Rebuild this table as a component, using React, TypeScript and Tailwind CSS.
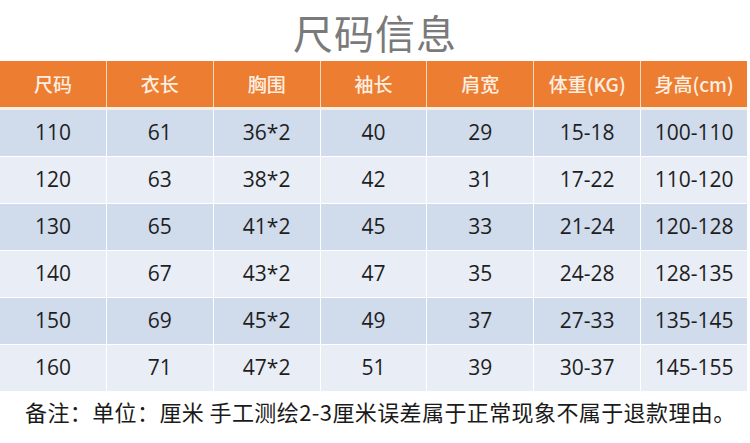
import React from "react";

const headers = ["尺码", "衣长", "胸围", "袖长", "肩宽", "体重(KG)", "身高(cm)"];
const rows = [
  ["110", "61", "36*2", "40", "29", "15-18", "100-110"],
  ["120", "63", "38*2", "42", "31", "17-22", "110-120"],
  ["130", "65", "41*2", "45", "33", "21-24", "120-128"],
  ["140", "67", "43*2", "47", "35", "24-28", "128-135"],
  ["150", "69", "45*2", "49", "37", "27-33", "135-145"],
  ["160", "71", "47*2", "51", "39", "30-37", "145-155"],
];

export default function App() {
  return (
    <div className="w-[750px] h-[443px] bg-white overflow-hidden" style={{ fontFamily: '"Open Sans", "Noto Sans CJK SC", sans-serif' }}>
      <div className="h-[61px] flex items-center justify-center pt-[2px]">
        <span className="text-[40px] leading-none text-[#7a7a7a] tracking-[1px]" style={{ fontFamily: '"Noto Sans CJK SC", sans-serif' }}>
          尺码信息
        </span>
      </div>
      <div className="w-[747px] flex flex-col">
        <div className="grid grid-cols-7 gap-px bg-[#f3d9bf] h-[46px]">
          {headers.map((h) => (
            <div key={h} className="bg-[#ed7d31] flex items-center justify-center text-[19px] font-medium text-[#fcefe2]" style={{ fontFamily: '"Noto Sans CJK SC", sans-serif' }}>
              {h}
            </div>
          ))}
        </div>
        <div className="h-[3px] bg-[#f7efe4]" />
        <div className="flex flex-col gap-px bg-white">
          {rows.map((r, i) => (
            <div key={i} className="grid grid-cols-7 gap-px h-[46px]">
              {r.map((c, j) => (
                <div key={j} className={`${i % 2 === 0 ? "bg-[#d0dbeb]" : "bg-[#e9edf5]"} flex items-center justify-center text-[21px] text-[#1e1e1e]`}>
                  {c}
                </div>
              ))}
            </div>
          ))}
        </div>
      </div>
      <div className="pl-[25px] pt-[9px] text-[22px] leading-none text-[#1a1a1a] whitespace-nowrap tracking-[0.4px]" style={{ fontFamily: '"Noto Sans CJK SC", sans-serif' }}>
        备注：单位：厘米 手工测绘2-3厘米误差属于正常现象不属于退款理由。
      </div>
    </div>
  );
}
